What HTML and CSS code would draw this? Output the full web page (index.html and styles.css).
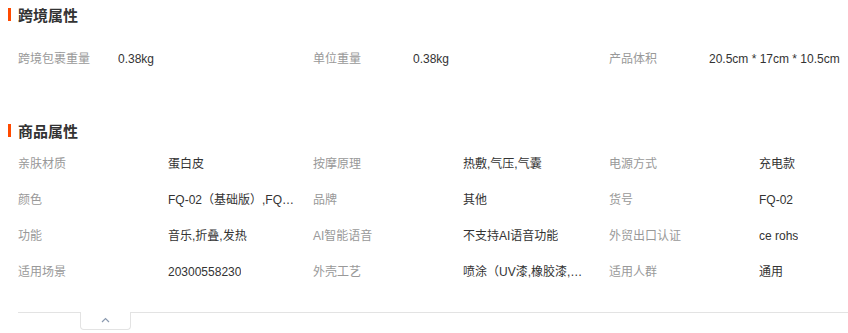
FILE: index.html
```html
<!DOCTYPE html>
<html lang="zh-CN">
<head>
<meta charset="utf-8">
<title>属性</title>
<link rel="stylesheet" href="styles.css">
</head>
<body>
<div class="page">
  <section class="section">
    <h2 class="title">跨境属性</h2>
    <div class="grid grid-short first">
      <div class="item"><span class="label">跨境包裹重量</span><span class="value">0.38kg</span></div>
      <div class="item"><span class="label">单位重量</span><span class="value">0.38kg</span></div>
      <div class="item"><span class="label">产品体积</span><span class="value">20.5cm * 17cm * 10.5cm</span></div>
    </div>
  </section>
  <section class="section second">
    <h2 class="title">商品属性</h2>
    <div class="grid grid-long">
      <div class="item"><span class="label">亲肤材质</span><span class="value">蛋白皮</span></div>
      <div class="item"><span class="label">按摩原理</span><span class="value">热敷,气压,气囊</span></div>
      <div class="item"><span class="label">电源方式</span><span class="value">充电款</span></div>
      <div class="item"><span class="label">颜色</span><span class="value">FQ-02（基础版）,FQ-02（升级版）</span></div>
      <div class="item"><span class="label">品牌</span><span class="value">其他</span></div>
      <div class="item"><span class="label">货号</span><span class="value">FQ-02</span></div>
      <div class="item"><span class="label">功能</span><span class="value">音乐,折叠,发热</span></div>
      <div class="item"><span class="label">AI智能语音</span><span class="value">不支持AI语音功能</span></div>
      <div class="item"><span class="label">外贸出口认证</span><span class="value">ce rohs</span></div>
      <div class="item"><span class="label">适用场景</span><span class="value">20300558230</span></div>
      <div class="item"><span class="label">外壳工艺</span><span class="value">喷涂（UV漆,橡胶漆,金属漆）</span></div>
      <div class="item"><span class="label">适用人群</span><span class="value">通用</span></div>
    </div>
  </section>
  <div class="footer">
    <button class="toggle" type="button" aria-label="收起">
      <svg width="9" height="6" viewBox="0 0 9 6"><polyline points="1,5 4.5,1.5 8,5" fill="none" stroke="#8b9ab0" stroke-width="1.2"/></svg>
    </button>
  </div>
</div>
</body>
</html>
```

FILE: styles.css
```css
html, body {
  margin: 0;
  padding: 0;
  background: #fff;
}
body {
  font-family: "Liberation Sans", "Noto Sans CJK SC", sans-serif;
  font-size: 12px;
  color: #333;
  overflow: hidden;
}
.page {
  width: 848px;
}
.title {
  display: flex;
  align-items: center;
  height: 28px;
  margin: 0;
  padding-left: 8px;
  font-family: "Noto Sans CJK SC", sans-serif;
  font-size: 15px;
  font-weight: 700;
  color: #333;
}
.title::before {
  content: "";
  display: block;
  width: 3px;
  height: 13px;
  background: #ff4a00;
  margin-right: 7px;
}
.grid {
  display: grid;
  grid-template-columns: 295px 296px 1fr;
  padding-left: 18px;
}
.grid.first {
  padding-top: 11px;
}
.second {
  margin-top: 41px;
}
.item {
  display: flex;
  align-items: center;
  box-sizing: border-box;
  height: 36px;
  padding-top: 4px;
  line-height: 16px;
  white-space: nowrap;
}
.label {
  color: #999;
  flex: none;
}
.grid-short .label {
  width: 100px;
}
.grid-long .label {
  width: 150px;
}
.value {
  color: #333;
  overflow: hidden;
  text-overflow: ellipsis;
  max-width: 129px;
}
.grid-short .value {
  max-width: none;
}
.footer {
  margin: 24px 0 0 18px;
  border-top: 1px solid #e3e3e3;
  height: 20px;
}
.toggle {
  display: flex;
  align-items: center;
  justify-content: center;
  margin: -1px 0 0 62px;
  width: 51px;
  height: 18px;
  padding: 0 0 2px;
  background: #fff;
  border: 1px solid #e3e3e3;
  border-top: none;
  border-radius: 0 0 4px 4px;
  cursor: pointer;
}
```
